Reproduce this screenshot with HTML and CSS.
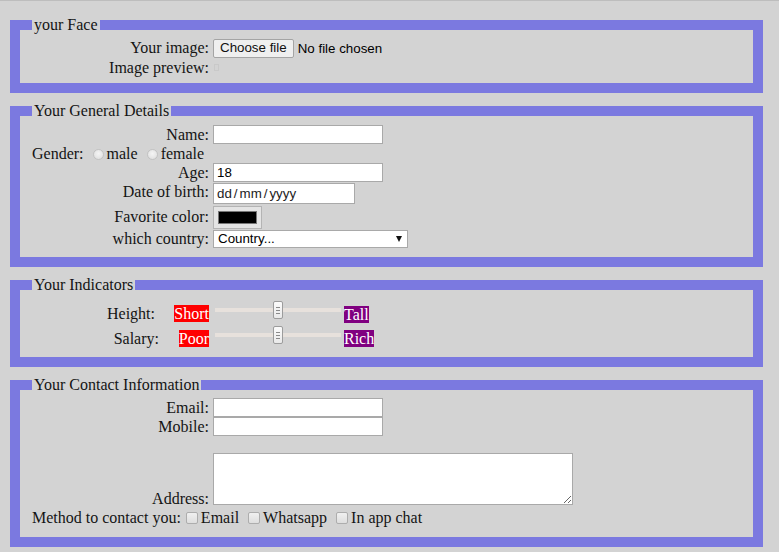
FILE: index.html
```html
<!DOCTYPE html>
<html lang="en">
<head>
<meta charset="utf-8">
<title>Form</title>
<link rel="stylesheet" href="styles.css">
</head>
<body>
<form class="form">
  <fieldset class="fs fs-face">
    <legend>your Face</legend>
    <div class="row h20">
      <label class="lbl">Your image:</label>
      <span class="file"><button type="button" class="file-btn">Choose file</button><span class="file-name">No file chosen</span></span>
    </div>
    <div class="row h19">
      <span class="lbl">Image preview:</span>
      <span class="preview"></span>
    </div>
  </fieldset>

  <fieldset class="fs fs-general">
    <legend>Your General Details</legend>
    <div class="row h21">
      <label class="lbl">Name:</label>
      <input class="txt" type="text">
    </div>
    <div class="line h18">Gender: <input class="radio" type="radio" name="g">male <input class="radio" type="radio" name="g">female</div>
    <div class="row h19">
      <label class="lbl">Age:</label>
      <input class="txt" type="text" value="18">
    </div>
    <div class="row h23">
      <label class="lbl up2">Date of birth:</label>
      <span class="date">dd<span class="sep">/</span>mm<span class="sep">/</span>yyyy</span>
    </div>
    <div class="row h24">
      <label class="lbl">Favorite color:</label>
      <span class="color"><span class="swatch"></span></span>
    </div>
    <div class="row h19">
      <label class="lbl">which country:</label>
      <span class="select">Country...</span>
    </div>
  </fieldset>

  <fieldset class="fs fs-ind">
    <legend>Your Indicators</legend>
    <div class="row h24">
      <span class="ind-name ind-h">Height:</span>
      <span class="ind-low"><span class="tag red">Short</span></span>
      <input class="range" type="range" min="0" max="100" value="50">
      <span class="tag purple">Tall</span>
    </div>
    <div class="row h25">
      <span class="ind-name ind-s">Salary:</span>
      <span class="ind-low"><span class="tag red">Poor</span></span>
      <input class="range" type="range" min="0" max="100" value="50">
      <span class="tag purple">Rich</span>
    </div>
  </fieldset>

  <fieldset class="fs fs-contact">
    <legend>Your Contact Information</legend>
    <div class="row h19">
      <label class="lbl">Email:</label>
      <input class="txt" type="text">
    </div>
    <div class="row h19">
      <label class="lbl">Mobile:</label>
      <input class="txt" type="text">
    </div>
    <div class="row row-end h70">
      <label class="lbl">Address:</label>
      <textarea class="area"></textarea>
    </div>
    <div class="line h23">Method to contact you: <input class="check first" type="checkbox">Email <input class="check" type="checkbox">Whatsapp <input class="check" type="checkbox">In app chat</div>
  </fieldset>
</form>
</body>
</html>
```

FILE: styles.css
```css
html, body {
  margin: 0;
}
body {
  background: #d3d3d3;
  border-top: 1px solid #bdbdbd;
  font: 16px "Liberation Serif", "Times New Roman", serif;
  color: #141414;
  height: 551px;
  overflow: hidden;
}
.form {
  padding: 15px 16px 0 10px;
  display: flex;
  flex-direction: column;
  gap: 9px;
}
.fs {
  margin: 0;
  min-width: 0;
  border: 10px solid #7b79e0;
  padding: 4px 12px 6px;
}
.fs legend {
  padding: 0 2px;
  line-height: 18px;
}
.fs-general { padding-bottom: 9px; }
.fs-ind { padding-top: 8px; padding-bottom: 6px; }
.fs-contact { padding-bottom: 8px; }

.row {
  display: flex;
  align-items: center;
}
.row-end { align-items: flex-end; }
.line {
  display: flex;
  align-items: center;
  white-space: pre;
}
.h18 { height: 18px; }
.h19 { height: 19px; }
.h20 { height: 20px; }
.h21 { height: 21px; }
.h23 { height: 23px; }
.h24 { height: 24px; }
.h25 { height: 25px; }
.h70 { height: 70px; }

.lbl {
  flex: none;
  width: 177px;
  margin-right: 4px;
  text-align: right;
  line-height: 18px;
}
.up2 { margin-bottom: 4px; }
.row-end .lbl { margin-bottom: -2px; }

.file-btn, .file-name, .txt, .date, .select, .area {
  font-family: "Liberation Sans", Arial, sans-serif;
  font-size: 13.33px;
  color: #000;
}
.file { display: flex; align-items: center; }
.file-btn {
  box-sizing: border-box;
  height: 19px;
  padding: 0 6px;
  border: 1px solid #a4a4a4;
  border-radius: 2px;
  background: #efefef;
  color: #111;
  line-height: 16px;
}
.file-name { margin-left: 4px; }
.preview {
  width: 3px;
  height: 5px;
  border: 1px solid #c9c9c9;
  margin-left: 1px;
  margin-bottom: 1px;
}

.txt {
  box-sizing: border-box;
  width: 170px;
  height: 19px;
  padding: 0 3px;
  border: 1px solid #a9a9a9;
  background: #fff;
  outline: none;
}
.date {
  box-sizing: border-box;
  width: 142px;
  height: 21px;
  padding: 0 3px;
  border: 1px solid #a9a9a9;
  background: #fff;
  display: flex;
  align-items: center;
  color: #222;
}
.sep { margin: 0 2px; }
.color {
  box-sizing: border-box;
  width: 49px;
  height: 23px;
  border: 1px solid #b4b4b4;
  background: #e4e4e4;
  padding: 4px 4px;
  display: flex;
}
.swatch {
  flex: 1;
  background: #000;
  border: 1px solid #777;
}
.select {
  position: relative;
  box-sizing: border-box;
  width: 195px;
  height: 18px;
  padding-left: 4px;
  border: 1px solid #a9a9a9;
  background: #fff;
  line-height: 16px;
}
.select::after {
  content: "";
  position: absolute;
  right: 5px;
  top: 5px;
  border-left: 3.5px solid transparent;
  border-right: 3.5px solid transparent;
  border-top: 6px solid #111;
}

.radio {
  appearance: none;
  -webkit-appearance: none;
  width: 11px;
  height: 11px;
  margin: 0 3px 0 5px;
  border: 1px solid #c2c2c2;
  border-radius: 50%;
  background: radial-gradient(circle at 50% 40%, #f4f4f4, #dcdcdc);
  box-sizing: border-box;
}
.check {
  appearance: none;
  -webkit-appearance: none;
  width: 12px;
  height: 12px;
  margin: 0 3px 0 5px;
  border: 1px solid #adadad;
  border-radius: 2px;
  background: linear-gradient(#f0f0f0, #dedede);
  box-sizing: border-box;
}
.check.first { margin-left: 1px; }

.ind-name { flex: none; width: 133px; text-align: right; box-sizing: border-box; }
.ind-h { padding-right: 10px; }
.ind-s { padding-right: 6px; }
.ind-low { flex: none; width: 44px; text-align: right; }
.tag {
  color: #fff;
  line-height: 17px;
  display: inline-block;
}
.red { background: #f00; }
.purple { background: #800080; }
.range {
  -webkit-appearance: none;
  appearance: none;
  flex: none;
  width: 126px;
  height: 18px;
  margin: 0 3px 8px 6px;
  background: transparent;
  padding: 0;
}
.range::-webkit-slider-runnable-track {
  height: 4px;
  background: #e7e1dc;
  border: none;
}
.range::-webkit-slider-thumb {
  -webkit-appearance: none;
  width: 10px;
  height: 18px;
  margin-top: -7px;
  box-sizing: border-box;
  border: 1px solid #9c9c9c;
  border-radius: 2px;
  background:
    linear-gradient(#8a8a8a, #8a8a8a) 2px 5px / 4px 1px no-repeat,
    linear-gradient(#8a8a8a, #8a8a8a) 2px 8px / 4px 1px no-repeat,
    linear-gradient(#8a8a8a, #8a8a8a) 2px 11px / 4px 1px no-repeat,
    linear-gradient(#fbfbfb, #e9e9e9);
}

.area {
  box-sizing: border-box;
  width: 360px;
  height: 52px;
  margin: 0 0 1px;
  border: 1px solid #a9a9a9;
  background: #fff;
  resize: both;
  outline: none;
}
```
